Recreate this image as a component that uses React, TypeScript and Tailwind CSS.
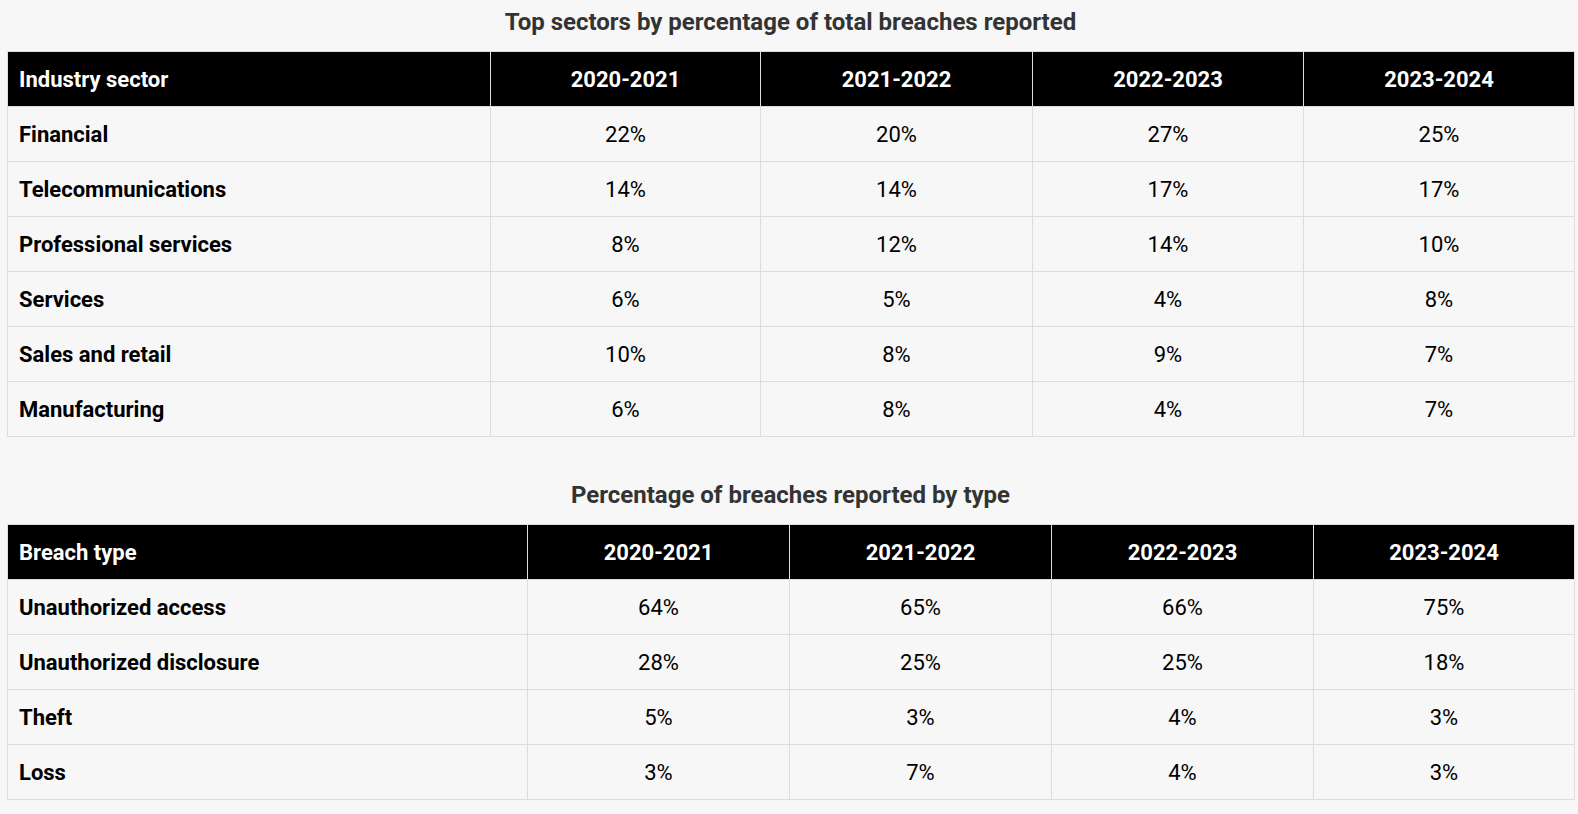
const years = ['2020-2021', '2021-2022', '2022-2023', '2023-2024'];

const sectors = [
    ['Financial', '22%', '20%', '27%', '25%'],
    ['Telecommunications', '14%', '14%', '17%', '17%'],
    ['Professional services', '8%', '12%', '14%', '10%'],
    ['Services', '6%', '5%', '4%', '8%'],
    ['Sales and retail', '10%', '8%', '9%', '7%'],
    ['Manufacturing', '6%', '8%', '4%', '7%'],
];

const breachTypes = [
    ['Unauthorized access', '64%', '65%', '66%', '75%'],
    ['Unauthorized disclosure', '28%', '25%', '25%', '18%'],
    ['Theft', '5%', '3%', '4%', '3%'],
    ['Loss', '3%', '7%', '4%', '3%'],
];

type DataTableProps = {
    firstHeader: string;
    rows: string[][];
    widths: string[];
};

function DataTable({ firstHeader, rows, widths }: DataTableProps) {
    return (
        <table className="w-full table-fixed border-collapse border border-[#dddddd]">
            <colgroup>
                {widths.map((w, i) => (
                    <col key={i} className={w} />
                ))}
            </colgroup>
            <thead>
                <tr className="h-[55px] bg-black text-white">
                    <th className="border border-[#dddddd] px-[11px] text-left text-[22px] font-bold">{firstHeader}</th>
                    {years.map((y) => (
                        <th key={y} className="border border-[#dddddd] px-[11px] text-center text-[22px] font-bold">
                            {y}
                        </th>
                    ))}
                </tr>
            </thead>
            <tbody>
                {rows.map((row) => (
                    <tr key={row[0]} className="h-[55px]">
                        <td className="border border-[#dddddd] px-[11px] text-left text-[22px] font-bold text-black">{row[0]}</td>
                        {row.slice(1).map((v, i) => (
                            <td key={i} className="border border-[#dddddd] px-[11px] text-center text-[22px] text-black">
                                {v}
                            </td>
                        ))}
                    </tr>
                ))}
            </tbody>
        </table>
    );
}

export default function App() {
    return (
        <div
            className="min-h-[814px] bg-[#f7f7f7] pl-[7px] pr-[4px]"
            style={{ fontFamily: 'Roboto, "Liberation Sans", sans-serif' }}
        >
            <h2 className="pt-[8px] pb-[15px] text-center text-[24px] leading-7 font-bold text-[#333333]">
                Top sectors by percentage of total breaches reported
            </h2>
            <DataTable
                firstHeader="Industry sector"
                rows={sectors}
                widths={['w-[483px]', 'w-[270px]', 'w-[272px]', 'w-[271px]', 'w-[271px]']}
            />
            <h2 className="pt-[44px] pb-[15px] text-center text-[24px] leading-7 font-bold text-[#333333]">
                Percentage of breaches reported by type
            </h2>
            <DataTable
                firstHeader="Breach type"
                rows={breachTypes}
                widths={['w-[520px]', 'w-[262px]', 'w-[262px]', 'w-[262px]', 'w-[261px]']}
            />
        </div>
    );
}
